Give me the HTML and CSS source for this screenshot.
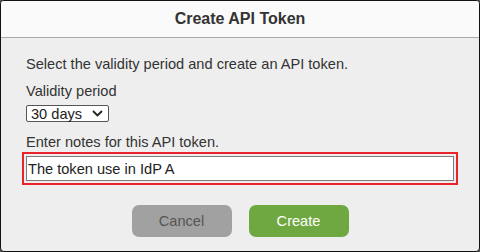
FILE: index.html
```html
<!DOCTYPE html>
<html>
<head>
<meta charset="utf-8">
<link rel="stylesheet" href="styles.css">
</head>
<body>
<div class="dialog">
  <div class="header">Create API Token</div>
  <div class="content">
    <p class="intro">Select the validity period and create an API token.</p>
    <div class="label">Validity period</div>
    <div class="select">
      <span>30 days</span>
      <svg width="11" height="7" viewBox="0 0 11 7"><path d="M1 1 L5.5 5.5 L10 1" fill="none" stroke="#222" stroke-width="1.8"/></svg>
    </div>
    <div class="label notes-label">Enter notes for this API token.</div>
    <div class="highlight">
      <div class="input">The token use in IdP A</div>
    </div>
    <div class="buttons">
      <div class="btn cancel">Cancel</div>
      <div class="btn create">Create</div>
    </div>
  </div>
</div>
</body>
</html>
```

FILE: styles.css
```css
html, body {
  margin: 0;
  padding: 0;
  background: #555;
}
body {
  width: 480px;
  height: 252px;
  font-family: "Liberation Sans", Arial, sans-serif;
  color: #333;
}
.dialog {
  box-sizing: border-box;
  width: 480px;
  height: 252px;
  border: 1px solid #111;
  border-radius: 4px;
  overflow: hidden;
  background: #eeeeee;
  display: flex;
  flex-direction: column;
}
.header {
  height: 36px;
  flex: none;
  background: #fafafa;
  border-bottom: 1px solid #aaa;
  display: flex;
  align-items: center;
  justify-content: center;
  font-weight: bold;
  font-size: 16px;
  color: #333;
}
.content {
  padding: 17px 21px 0 25px;
  font-size: 14.6px;
}
.intro {
  margin: 0;
  line-height: 18px;
}
.label {
  margin-top: 9px;
  line-height: 18px;
}
.select {
  margin-top: 5px;
  box-sizing: border-box;
  width: 83px;
  height: 17px;
  border: 1px solid #555;
  background: #fff;
  display: flex;
  align-items: center;
  justify-content: space-between;
  padding: 0 5px 0 4px;
  font-size: 14.6px;
  color: #222;
  border-radius: 2px;
}
.notes-label {
  margin-top: 11px;
}
.highlight {
  margin-top: 1px;
  margin-left: -4px;
  width: 436px;
  height: 33px;
  box-sizing: border-box;
  border: 2px solid #e8232b;
  padding: 2px;
}
.input {
  box-sizing: border-box;
  height: 25px;
  border: 1px solid #7a7a7a;
  background: #fff;
  display: flex;
  align-items: center;
  padding-left: 1px;
  font-size: 14.6px;
  color: #222;
}
.buttons {
  margin-top: 20px;
  display: flex;
  justify-content: center;
  gap: 17px;
  padding-right: 4px;
}
.btn {
  width: 100px;
  height: 32px;
  border-radius: 7px;
  display: flex;
  align-items: center;
  justify-content: center;
  font-size: 14.6px;
}
.cancel {
  background: #a1a1a1;
  color: #555;
}
.create {
  background: #6fa840;
  color: #fff;
}
```
